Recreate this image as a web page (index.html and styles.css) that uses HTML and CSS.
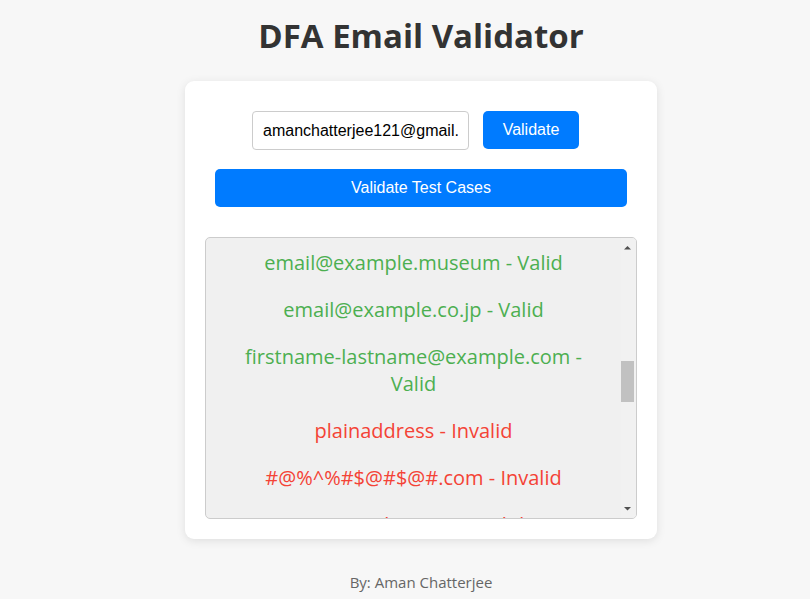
FILE: index.html
```html
<!DOCTYPE html>
<html lang="en">
<head>
<meta charset="utf-8">
<title>DFA Email Validator</title>
<link rel="stylesheet" href="styles.css">
</head>
<body>
<div class="page">
  <h1 class="title">DFA Email Validator</h1>
  <div class="card">
    <div class="input-row">
      <input class="email-input" type="text" value="amanchatterjee121@gmail.com">
      <button class="btn btn-validate">Validate</button>
    </div>
    <button class="btn btn-tests">Validate Test Cases</button>
    <div class="results">
      <div class="results-list" id="results">
        <p class="valid">email@example.com - Valid</p>
        <p class="valid">firstname.lastname@example.com - Valid</p>
        <p class="valid">email@subdomain.example.com - Valid</p>
        <p class="valid">firstname+lastname@example.com - Valid</p>
        <p class="valid">email@123.123.123.123 - Valid</p>
        <p class="valid">email@[123.123.123.123] - Valid</p>
        <p class="valid">"email"@example.com - Valid</p>
        <p class="valid">1234567890@example.com - Valid</p>
        <p class="valid">email@example-one.com - Valid</p>
        <p class="valid">_______@example.com - Valid</p>
        <p class="valid">email@example.name - Valid</p>
        <p class="valid" id="anchor">email@example.museum - Valid</p>
        <p class="valid">email@example.co.jp - Valid</p>
        <p class="valid">firstname-lastname@example.com - Valid</p>
        <p class="invalid">plainaddress - Invalid</p>
        <p class="invalid">#@%^%#$@#$@#.com - Invalid</p>
        <p class="invalid">@example.com - Invalid</p>
        <p class="invalid">Joe Smith &lt;email@example.com&gt; - Invalid</p>
        <p class="invalid">email.example.com - Invalid</p>
        <p class="invalid">email@example@example.com - Invalid</p>
        <p class="invalid">.email@example.com - Invalid</p>
        <p class="invalid">email.@example.com - Invalid</p>
        <p class="invalid">email..email@example.com - Invalid</p>
        <p class="invalid">email@example.com (Joe Smith) - Invalid</p>
        <p class="invalid">email@example - Invalid</p>
        <p class="invalid">email@-example.com - Invalid</p>
        <p class="invalid">email@111.222.333.44444 - Invalid</p>
        <p class="invalid">email@example..com - Invalid</p>
        <p class="invalid">Abc..123@example.com - Invalid</p>
      </div>
      <div class="scrollbar" aria-hidden="true">
        <div class="sb-button">
          <svg class="sb-arrow" width="15" height="15" viewBox="0 0 15 15"><polygon points="3,11.5 10,11.5 6.5,8" fill="#505050"/></svg>
        </div>
        <div class="sb-track">
          <div class="sb-thumb" style="margin-top:108px;height:41px"></div>
        </div>
        <div class="sb-button">
          <svg class="sb-arrow" width="15" height="15" viewBox="0 0 15 15"><polygon points="3,4 10,4 6.5,7.5" fill="#505050"/></svg>
        </div>
      </div>
    </div>
  </div>
  <footer class="footer">By: Aman Chatterjee</footer>
</div>
<script src="script.js"></script>
</body>
</html>
```
FILE: styles.css
```css
* { box-sizing: border-box; }
html, body { margin: 0; padding: 0; }
body {
  background: #f7f7f7;
  font-family: "Open Sans", "Noto Sans", sans-serif;
  color: #333;
}
.page {
  display: flex;
  flex-direction: column;
  align-items: center;
  padding-left: 32px;
  padding-top: 14px;
}
.title {
  margin: 0;
  font-size: 33px;
  line-height: 44px;
  font-weight: 700;
  color: #333;
}
.card {
  margin-top: 23px;
  width: 472px;
  background: #fff;
  border-radius: 9px;
  box-shadow: 0 2px 10px rgba(0,0,0,0.1);
  padding: 30px 20px 20px;
  display: flex;
  flex-direction: column;
}
.input-row {
  display: flex;
  justify-content: center;
  gap: 14px;
  margin-right: 11px;
}
.email-input {
  width: 217px;
  height: 39px;
  padding: 0 10px;
  border: 1px solid #ccc;
  border-radius: 4px;
  font-family: "Liberation Sans", Arial, sans-serif;
  font-size: 16px;
  color: #000;
  outline: none;
}
.btn {
  background: #007bff;
  color: #fff;
  border: none;
  border-radius: 5px;
  font-family: "Liberation Sans", Arial, sans-serif;
  font-size: 16px;
  cursor: pointer;
}
.btn-validate {
  width: 96px;
  height: 38px;
}
.btn-tests {
  margin: 19px 10px 0;
  height: 38px;
}
.results {
  margin-top: 30px;
  height: 282px;
  display: flex;
  overflow: hidden;
  background: #f0f0f0;
  border: 1px solid #ccc;
  border-radius: 5px;
}
.results-list {
  position: relative;
  flex: 1;
  min-width: 0;
  overflow: hidden;
  padding: 0 18px;
  text-align: center;
}
.results-list p {
  margin: 10px 0 20px;
  font-size: 20px;
  line-height: 27px;
}
.valid { color: #4caf50; }
.invalid { color: #f44336; }
.scrollbar {
  width: 15px;
  flex: none;
  display: flex;
  flex-direction: column;
  background: #f1f1f1;
}
.sb-button {
  height: 15px;
  flex: none;
}
.sb-arrow { display: block; }
.sb-track {
  flex: 1;
}
.sb-thumb {
  width: 13px;
  background: #c1c1c1;
}
.footer {
  margin-top: 33px;
  font-size: 15px;
  color: #666;
}
```
FILE: script.js
```js
var list = document.getElementById('results');
var anchor = document.getElementById('anchor');
list.scrollTop = anchor.offsetTop - 11;
```
